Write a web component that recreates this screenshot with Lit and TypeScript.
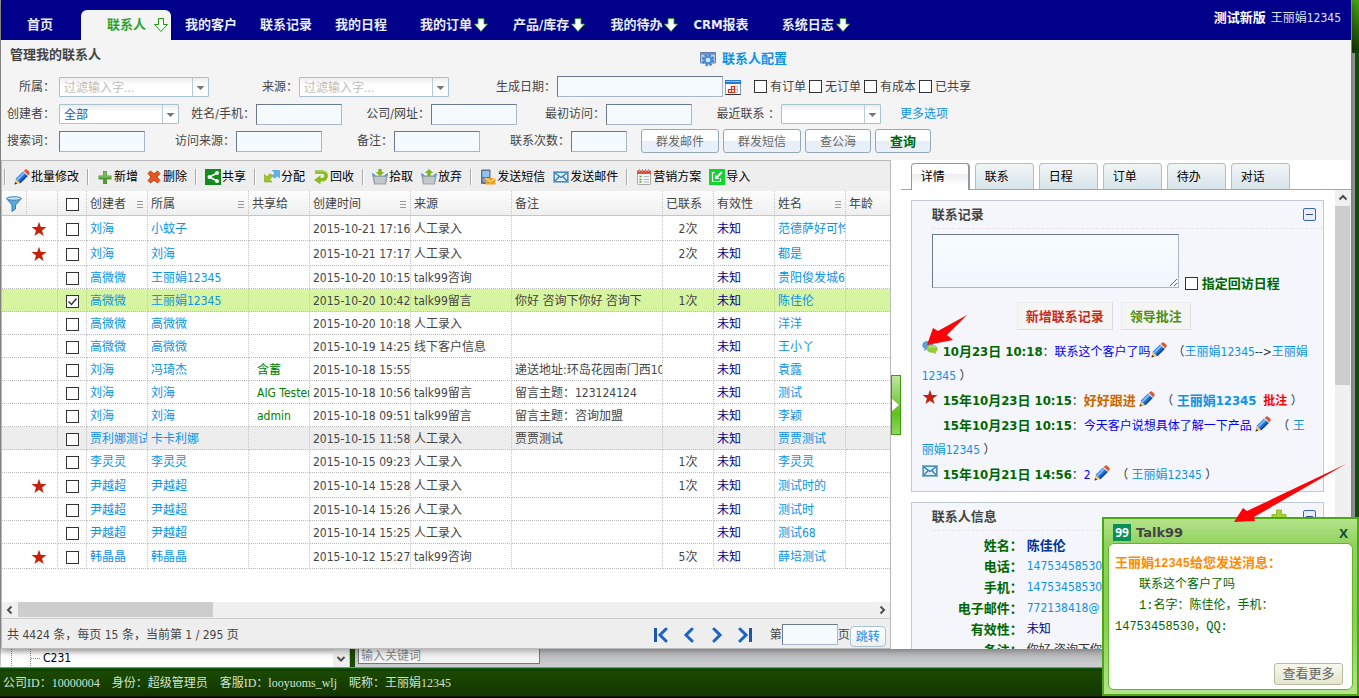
import { LitElement, html, css, nothing, TemplateResult } from "lit";
import { customElement, property, state } from "lit/decorators.js";
import { classMap } from "lit/directives/class-map.js";

const icons: Record<string, TemplateResult> = {
  pencil: html`<svg viewBox="0 0 16 16"><path d="M.5 15.500L1.700 9.800 6.400 14.300z" fill="#f2c27a"/><path d="M.5 15.500l.6-2.600 2.100 1.900z" fill="#333"/><path d="M1.700 9.800L9.600 1.900l4.600 4.500-7.800 7.900z" fill="#1f6fd0"/><path d="M2.500 10L10 2.500l1.500 1.500L4 11.500z" fill="#7dbcf5"/><path d="M5.300 13.200l7.800-7.900 1.100 1.100-7.800 7.900z" fill="#0c4593"/><path d="M9.600 1.900L11 .7q1.200-.9 2.400.2l1.700 1.700q1 1.100.2 2.400l-1.100 1.400z" fill="#e2532d"/><path d="M8.900 2.600l.9-.9 4.500 4.500-.9.9z" fill="#d8dde4"/></svg>`,
  plus: html`<svg viewBox="0 0 16 16"><path d="M6 2h4v4.500h4.500v4H10V15H6v-4.500H1.500v-4H6z" fill="#4f9a35"/><path d="M6.500 2.500h3V7H14v1.500H2V7h4.500z" fill="#79b85f"/></svg>`,
  plusLight: html`<svg viewBox="0 0 16 16"><path d="M5.500 1h5v4.500H15v5h-4.500V15h-5v-4.500H1v-5h4.500z" fill="#a8cf38" stroke="#8dbb2c"/></svg>`,
  cross: html`<svg viewBox="0 0 16 16"><path d="M2 4.500L4.500 2 8 5l3.500-3L14 4.500 11 8l3 3.500-2.500 2.500L8 11l-3.500 3L2 11.500 5 8z" fill="#e2571f" stroke="#c8431a"/></svg>`,
  share: html`<svg viewBox="0 0 16 16"><rect width="16" height="16" fill="#128a1c"/><path d="M12 4L4.500 8 12 12" fill="none" stroke="#fff" stroke-width="1.500"/><circle cx="12" cy="4" r="2" fill="#fff"/><circle cx="4.500" cy="8" r="2" fill="#fff"/><circle cx="12" cy="12" r="2" fill="#fff"/></svg>`,
  assign: html`<svg viewBox="0 0 16 16"><path d="M.5 13V5.500l2.300 2.300L6.300 4.600l2.500 2.500-3 3.400L8 13z" fill="#9cc32c" stroke="#7ea51d" stroke-width=".6"/><path d="M15.500 1.500v7.500L13.200 6.700 10.700 9.300 8.200 6.700 11 4.300 8.500 1.500z" fill="#5db4e8" stroke="#3a93cc" stroke-width=".6"/></svg>`,
  recycle: html`<svg viewBox="0 0 16 16"><path d="M2 3h7.200a3.900 3.900 0 0 1 0 7.800H6.500" fill="none" stroke="#8ab923" stroke-width="3.600"/><path d="M7.500 6.300V15.500L1 11z" fill="#8ab923"/><path d="M2 2.200h7a4.600 4.600 0 0 1 3.800 2" fill="none" stroke="#b6da55"/></svg>`,
  basketIn: html`<svg viewBox="0 0 16 16"><path d="M0 5h2.500l1 1.500h9L13.500 5H16l-2 10.500H2z" fill="#9aa0a6"/><path d="M2 8h12l-1.300 6.500H3.300z" fill="#c3c8cc"/><path d="M0 4.500l3.500 3M16 4.500l-3.500 3" stroke="#4aa3dd" stroke-width="1.600"/><path d="M6.300 0h3.400v3h2.500L8 7.300 3.800 3h2.500z" fill="#7fb520"/></svg>`,
  basketOut: html`<svg viewBox="0 0 16 16"><path d="M0 5h2.500l1 1.500h9L13.500 5H16l-2 10.500H2z" fill="#9aa0a6"/><path d="M2 8h12l-1.300 6.500H3.300z" fill="#c3c8cc"/><path d="M0 4.500l3.500 3M16 4.500l-3.500 3" stroke="#4aa3dd" stroke-width="1.600"/><path d="M6.300 7.300h3.400V4h2.500L8 0 3.800 4h2.500z" fill="#7fb520"/></svg>`,
  phone: html`<svg viewBox="0 0 16 16"><rect x="1" y=".5" width="9.500" height="14.500" rx="1" fill="#5c6f86"/><rect x="2.300" y="2" width="7" height="6" fill="#8fc3f0"/><path d="M2.500 10h6M2.500 12h4" stroke="#c9d3de" stroke-width="1"/><rect x="5.500" y="9" width="10" height="6.500" fill="#f0a21d"/><path d="M5.500 9l5 3.700 5-3.700" fill="none" stroke="#fff2cf"/></svg>`,
  mail: html`<svg viewBox="0 0 16 16"><rect x=".5" y="2.500" width="15" height="11" fill="#4c90bd" stroke="#86b4cf"/><rect x="2" y="4" width="12" height="8" fill="#d9ecf7"/><path d="M2 4l6 4.500L14 4M2 12l4.200-4.500M14 12L9.800 7.500" fill="none" stroke="#3978a8" stroke-width="1.200"/></svg>`,
  plan: html`<svg viewBox="0 0 16 16"><rect x="1.500" y="2.500" width="13" height="13" rx="1" fill="#f5f5f5" stroke="#a9a9a9"/><rect x="1" y="1.500" width="14" height="3.500" fill="#dd5238"/><path d="M3.500 0v3M6.500 0v3M9.500 0v3M12.500 0v3" stroke="#9a9a9a"/><path d="M3.500 7.500h2M3.500 10.500h2M3.500 13h2" stroke="#5b9d33" stroke-width="1.500"/><path d="M7.500 7.500H13M7.500 10.500H13M7.500 13H13" stroke="#b5b5b5"/></svg>`,
  import: html`<svg viewBox="0 0 16 16"><rect width="16" height="16" fill="#10d52c"/><path d="M6 3.500H3.500V12.500H11.500V9.500" fill="none" stroke="#fff" stroke-width="1.200"/><path d="M12.800 3.200L8 8" stroke="#fff" stroke-width="2"/><path d="M6 5.500V10h4.500z" fill="#fff"/></svg>`,
  config: html`<svg viewBox="0 0 16 16"><path d="M.5 1.500h15v10.500H.5z" fill="#b4c8e2" stroke="#6483b0"/><path d="M1 2h14v1.500H1z" fill="#6c8dbc"/><circle cx="8" cy="9" r="5.200" fill="none" stroke="#3f86cc" stroke-width="2" stroke-dasharray="2.400 1.680"/><circle cx="8" cy="9" r="3.400" fill="#d5e6f7" stroke="#4a8fd2" stroke-width="2.400"/></svg>`,
  calendar: html`<svg viewBox="0 0 16 16"><rect x=".5" y="1.500" width="15" height="14" fill="#fff" stroke="#8aa0b8"/><path d="M0 1h16v4H0z" fill="#2478d8"/><path d="M1 2h14v1H1z" fill="#8fc4f8"/><path d="M.5 15.500h15" stroke="#333"/><path d="M9.500 7.500h3v6h-3zM9.500 10.500h3" fill="none" stroke="#b8c0c8"/><path d="M3.500 10.500h3v3h-3zM6.500 10.500h3v3h-3zM6.500 7.500h3v3h-3z" fill="none" stroke="#e02a12" stroke-width="1.200"/></svg>`,
  funnel: html`<svg viewBox="0 0 16 16"><path d="M.5 2.500L6 9v6.500l3.500-2.500V9l6-6.500z" fill="#56abe0" stroke="#2b7fb8"/><ellipse cx="8" cy="2.500" rx="7.300" ry="1.700" fill="#d3ecfa" stroke="#2b7fb8"/></svg>`,
  star: html`<svg viewBox="0 0 16 16"><path d="M8 .8l1.800 5.200 5.700.1-4.500 3.400 1.600 5.500L8 11.800 3.400 15 5 9.500.5 6.100l5.700-.1z" fill="#c8200a"/></svg>`,
  chat: html`<svg viewBox="0 0 16 16"><path d="M6 1C2.500 1 .3 2.800.3 5.200c0 1.500.8 2.600 2.200 3.400L2 11l3-1.700c4 .3 6.500-1.500 6.500-4.100S9.300 1 6 1z" fill="#5f9fd8"/><path d="M10 5c3.300 0 5.600 1.600 5.600 4 0 1.300-.7 2.300-1.900 3l.6 2.300-3-1.600c-4 .4-6.500-1.300-6.500-3.700S6.800 5 10 5z" fill="#93cc3a"/><path d="M6.500 7.500q3.500-2.500 7 0" fill="none" stroke="#cdeb8f"/></svg>`,
  down: html`<svg viewBox="0 0 14 14"><path d="M4.500.5h5v6h4L7 13.500.5 6.500h4z" fill="#fff" stroke="#1f9a10"/></svg>`,
  downBold: html`<svg viewBox="0 0 14 14"><path d="M4 .5h6v5.500h3.700L7 13.500.3 6H4z" fill="#fff" stroke="#1f9a10" stroke-width=".8"/></svg>`,
  first: html`<svg viewBox="0 0 16 16"><path d="M2.500 1v14" stroke="#1c55ad" stroke-width="3"/><path d="M13 2L7 8l6 6" fill="none" stroke="#1b63c6" stroke-width="3" stroke-linecap="round"/></svg>`,
  prev: html`<svg viewBox="0 0 16 16"><path d="M11 2L5 8l6 6" fill="none" stroke="#1b63c6" stroke-width="3" stroke-linecap="round"/></svg>`,
  next: html`<svg viewBox="0 0 16 16"><path d="M5 2l6 6-6 6" fill="none" stroke="#1b63c6" stroke-width="3" stroke-linecap="round"/></svg>`,
  last: html`<svg viewBox="0 0 16 16"><path d="M13.500 1v14" stroke="#1c55ad" stroke-width="3"/><path d="M3 2l6 6-6 6" fill="none" stroke="#1b63c6" stroke-width="3" stroke-linecap="round"/></svg>`,
  caretL: html`<svg viewBox="0 0 16 16"><path d="M9.500 4.500L6 8l3.500 3.500" fill="none" stroke="#505050" stroke-width="2"/></svg>`,
  caretR: html`<svg viewBox="0 0 16 16"><path d="M6.500 4.500L10 8l-3.500 3.500" fill="none" stroke="#505050" stroke-width="2"/></svg>`,
  caretU: html`<svg viewBox="0 0 16 16"><path d="M4.500 9.500L8 6l3.500 3.500" fill="none" stroke="#505050" stroke-width="2"/></svg>`,
  caretD: html`<svg viewBox="0 0 16 16"><path d="M4.500 6.500L8 10l3.500-3.500" fill="none" stroke="#505050" stroke-width="2"/></svg>`,
};

@customElement("ui-icon")
class UiIcon extends LitElement {
  @property() name = "";
  static styles = css`
    :host { display: inline-block; width: 16px; height: 16px; flex: none; }
    svg { display: block; width: 100%; height: 100%; }
  `;
  render() { return icons[this.name] ?? nothing; }
}

interface NavItem { text: string; menu?: boolean; active?: boolean; cls?: string }
const NAV: NavItem[] = [
  { text: "首页", cls: "home" },
  { text: "联系人", menu: true, active: true },
  { text: "我的客户" }, { text: "联系记录" }, { text: "我的日程" },
  { text: "我的订单", menu: true }, { text: "产品/库存", menu: true },
  { text: "我的待办", menu: true }, { text: "CRM报表" }, { text: "系统日志", menu: true },
];

const TOOLS: (string[] | null)[] = [
  null, ["pencil", "批量修改"], null, ["plus", "新增"], ["cross", "删除"], null,
  ["share", "共享"], null, ["assign", "分配"], ["recycle", "回收"], null,
  ["basketIn", "拾取"], ["basketOut", "放弃"], null,
  ["phone", "发送短信"], ["mail", "发送邮件"], null, ["plan", "营销方案"], ["import", "导入"],
];

interface Row {
  star?: boolean; creator: string; owner: string; shared?: string; time: string;
  source?: string; note?: string; count?: string; name: string; checked?: boolean; hover?: boolean;
}
const ROWS: Row[] = [
  { star: true, creator: "刘海", owner: "小蚊子", time: "2015-10-21 17:16", source: "人工录入", count: "2次", name: "范德萨好可怜" },
  { star: true, creator: "刘海", owner: "刘海", time: "2015-10-21 17:17", source: "人工录入", count: "2次", name: "都是" },
  { creator: "高微微", owner: "王丽娟12345", time: "2015-10-20 10:15", source: "talk99咨询", name: "贵阳俊发城6" },
  { creator: "高微微", owner: "王丽娟12345", time: "2015-10-20 10:42", source: "talk99留言", note: "你好 咨询下你好 咨询下", count: "1次", name: "陈佳伦", checked: true },
  { creator: "高微微", owner: "高微微", time: "2015-10-20 10:18", source: "人工录入", name: "洋洋" },
  { creator: "高微微", owner: "高微微", time: "2015-10-19 14:25", source: "线下客户信息", name: "王小丫" },
  { creator: "刘海", owner: "冯琦杰", shared: "含蓄", time: "2015-10-18 15:55", note: "递送地址:环岛花园南门西100", name: "袁露" },
  { creator: "刘海", owner: "刘海", shared: "AIG Tester", time: "2015-10-18 10:56", source: "talk99留言", note: "留言主题：123124124", name: "测试" },
  { creator: "刘海", owner: "刘海", shared: "admin", time: "2015-10-18 09:51", source: "talk99留言", note: "留言主题：咨询加盟", name: "李颖" },
  { creator: "贾利娜测试", owner: "卡卡利娜", time: "2015-10-15 11:58", source: "人工录入", note: "贾贾测试", name: "贾贾测试", hover: true },
  { creator: "李灵灵", owner: "李灵灵", time: "2015-10-15 09:23", source: "人工录入", count: "1次", name: "李灵灵" },
  { star: true, creator: "尹越超", owner: "尹越超", time: "2015-10-14 15:28", source: "人工录入", count: "1次", name: "测试时的" },
  { creator: "尹越超", owner: "尹越超", time: "2015-10-14 15:26", source: "人工录入", name: "测试时" },
  { creator: "尹越超", owner: "尹越超", time: "2015-10-14 15:25", source: "人工录入", name: "测试68" },
  { star: true, creator: "韩晶晶", owner: "韩晶晶", time: "2015-10-12 15:27", source: "talk99咨询", count: "5次", name: "薛培测试" },
];

const base = css`
  * { box-sizing: border-box; }
  button, input, select, textarea { font: inherit; margin: 0; color: inherit; }
  button { cursor: pointer; white-space: nowrap; }
  a { color: #0a93e8; text-decoration: none; }
  input[type="checkbox"] {
    appearance: none; width: 13px; height: 13px; flex: none;
    border: 1px solid #333; background: #fff center / 11px no-repeat;
  }
  input[type="checkbox"]:checked {
    background-image: url("data:image/svg+xml,%3Csvg xmlns='http://www.w3.org/2000/svg' viewBox='0 0 11 11'%3E%3Cpath d='M1.500 5.500l3 3 5-6' fill='none' stroke='%23333' stroke-width='1.500'/%3E%3C/svg%3E");
  }
  .box {
    height: 21px; border: 1px solid; border-color: #687a8c #a8b8ca #a8b8ca #687a8c;
    background: #f4fafe; padding: 0 3px; width: 100%; border-radius: 0;
  }
`;

@customElement("search-filters")
class SearchFilters extends LitElement {
  static styles = [base, css`
    :host { display: block; height: 120px; background: #f4f4f4; color: #444; }
    .head { display: flex; height: 34px; }
    .title { margin: 0; padding: 4px 0 0 9px; width: 699px; font-size: 13px; line-height: 21px; }
    .config { display: flex; align-items: center; gap: 6px; font-size: 13px; font-weight: bold; height: 22px; margin-top: 8px; }
    .row { display: grid; column-gap: 4px; align-items: center; white-space: nowrap; line-height: 20px; }
    .r1 { grid-template-columns: 54px 150px 82px 150px 100px 166px 1fr; height: 25px; }
    .r2 { grid-template-columns: 54px 120px 69px 86px 81px 86px 81px 86px 81px 100px 1fr; height: 30px; }
    .r3 { grid-template-columns: 54px 86px 83px 86px 64px 86px 83px 56px 1fr; height: 24px; }
    label { text-align: right; }
    .row > label:not(:first-child) { margin-right: -3px; }
    .combo {
      appearance: none; width: 100%; height: 20px; padding: 0 20px 0 4px; border: 1px solid #a9c3ce; border-radius: 1px;
      line-height: 20px; color: #1c5ca0;
      background:
        url("data:image/svg+xml,%3Csvg xmlns='http://www.w3.org/2000/svg' viewBox='0 0 16 18'%3E%3Cpath d='M.5 0v18' stroke='%23b5ccd5'/%3E%3Cpath d='M4.500 8h8l-4 4z' fill='%23777'/%3E%3C/svg%3E") right center / 16px 18px no-repeat,
        linear-gradient(#ededed, #fff 7px);
    }
    .hint { color: #bdbdbd; }
    .checks { display: flex; align-items: center; margin-left: -2px; }
    .cal { border: 0; background: none; padding: 0; display: flex; margin-right: 13px; }
    .tick { display: flex; align-items: center; gap: 3px; margin-right: 3px; }
    .more { margin-left: 15px; }
    .btns { display: flex; gap: 4px; margin-left: 10px; }
    .btn {
      height: 24px; min-width: 56px; padding: 0 14px; border: 1px solid #94a9b8; border-radius: 3px; color: #666; line-height: 24px;
      background: linear-gradient(#fcfeff 0 50%, #e6eef8 50%, #e9f0f9);
    }
    .go { font-size: 13px; font-weight: bold; color: #060; }
  `];
  render() {
    const text = (id: string, label: string) => html`<label for=${id}>${label}</label><input class="box" id=${id}>`;
    return html`
      <div class="head">
        <h1 class="title">管理我的联系人</h1>
        <a class="config" href="#"><ui-icon name="config"></ui-icon>联系人配置</a>
      </div>
      <div class="row r1">
        <label for="owner">所属：</label><select class="combo hint" id="owner"><option>过滤输入字...</option></select>
        <label for="src">来源：</label><select class="combo hint" id="src"><option>过滤输入字...</option></select>
        ${text("date", "生成日期：")}
        <div class="checks">
          <button class="cal" aria-label="日历"><ui-icon name="calendar"></ui-icon></button>
          ${["有订单", "无订单", "有成本", "已共享"].map((t) => html`<label class="tick"><input type="checkbox">${t}</label>`)}
        </div>
      </div>
      <div class="row r2">
        <label for="creator">创建者：</label><select class="combo" id="creator"><option>全部</option></select>
        ${text("name", "姓名/手机：")}${text("company", "公司/网址：")}${text("firstv", "最初访问：")}
        <label for="recent">最近联系 ：</label><select class="combo" id="recent"><option></option></select>
        <a class="more" href="#">更多选项</a>
      </div>
      <div class="row r3">
        ${text("kw", "搜索词：")}${text("visit", "访问来源：")}${text("note", "备注：")}${text("times", "联系次数：")}
        <div class="btns">
          <button class="btn">群发邮件</button><button class="btn">群发短信</button>
          <button class="btn">查公海</button><button class="btn go">查询</button>
        </div>
      </div>`;
  }
}

@customElement("contact-grid")
class ContactGrid extends LitElement {
  @state() rows = ROWS;
  static styles = [base, css`
    :host { display: flex; flex-direction: column; min-width: 0; border: 1px solid #bbb; background: #fff; color: #444; }
    .tools { display: flex; align-items: center; gap: 8px; height: 30px; background: #eee; padding: 2px 0 0 2px; flex: none; }
    .sep { width: 2px; height: 16px; background: #aaa; border-right: 1px solid #fff; flex: none; }
    .tool { display: flex; align-items: center; gap: 1px; padding: 0; border: 0; background: none; color: #000; line-height: 20px; }
    .body { flex: 1; min-height: 0; overflow: hidden; }
    table { width: 100%; table-layout: fixed; border-collapse: separate; border-spacing: 0; }
    th, td {
      overflow: hidden; white-space: nowrap; text-align: left; font-weight: normal; line-height: 20px;
      padding: 2px 0 0 3px; border-right: 1px dotted #c4c4c4;
    }
    th:last-child, td:last-child { border-right: 0; }
    th { height: 25px; border-bottom: 1px solid #c6c6c6; background: linear-gradient(#fdfdfd, #efefef); }
    .th { display: flex; justify-content: space-between; align-items: center; }
    .grip { width: 6px; height: 7px; margin-right: 4px; background: repeating-linear-gradient(#999 0 1px, transparent 1px 3px); }
    td { height: 23px; border-bottom: 1px dotted #bbb; }
    tr.starred td { height: 25px; }
    tr.on td { background: #d7f4a0; }
    tr.hover td { background: #ededed; }
    td:first-child { border-right: 0; }
    .c { text-align: center; padding: 2px 0 0; }
    .c input { display: block; margin: 0 auto; }
    .c ui-icon { display: block; margin: 0 auto; }
    .flag ui-icon { margin: 0 0 0 4px; }
    .shared { color: #008000; padding-left: 8px; }
    .valid { color: #00008b; }
    .w1 { width: 25px; } .w2 { width: 31px; } .w3 { width: 29px; } .w4 { width: 61px; }
    .w5 { width: 101px; } .w6 { width: 151px; } .w7 { width: 51px; } .w8 { width: 71px; }
    .hbar { display: flex; height: 16px; background: #f0f0f0; flex: none; }
    .thumb { width: 22%; background: #cdcdcd; height: 15px; }
    .grow { flex: 1; }
    .pager { display: flex; align-items: center; height: 30px; background: #eee; border-top: 1px solid #ccc; padding: 2px 4px 0 5px; flex: none; white-space: nowrap; }
    .pos { word-spacing: normal; }
    .nav { display: flex; gap: 12px; margin-right: 17px; }
    .nav button { border: 0; padding: 0; background: none; display: flex; }
    .page { width: 56px; }
    .jump { width: 36px; height: 21px; padding: 0; margin-top: 4px; border: 1px solid #a9c5d4; border-radius: 4px; background: linear-gradient(#fff, #eee); color: #0a93e8; line-height: 20px; }
  `];
  render() {
    const th = (cls: string, text: string, grip = false) =>
      html`<th class=${cls}><div class="th">${text}${grip ? html`<span class="grip"></span>` : nothing}</div></th>`;
    return html`
      <div class="tools">
        ${TOOLS.map((t) => t ? html`<button class="tool"><ui-icon name=${t[0]}></ui-icon>${t[1]}</button>` : html`<span class="sep"></span>`)}
      </div>
      <div class="body">
        <table>
          <thead><tr>
            <th class="w1 c"><ui-icon name="funnel"></ui-icon></th><th class="w2"></th>
            <th class="w3 c"><input type="checkbox" aria-label="全选"></th>
            ${th("w4", "创建者", true)}${th("w5", "所属", true)}${th("w4", "共享给")}${th("w5", "创建时间", true)}
            ${th("w5", "来源")}${th("w6", "备注")}${th("w7", "已联系")}${th("w4", "有效性")}${th("w8", "姓名", true)}${th("", "年龄")}
          </tr></thead>
          <tbody>
            ${this.rows.map((r) => html`<tr class=${classMap({ starred: !!r.star, on: !!r.checked, hover: !!r.hover })}>
              <td></td><td class="c flag">${r.star ? html`<ui-icon name="star"></ui-icon>` : nothing}</td>
              <td class="c"><input type="checkbox" aria-label=${r.name} .checked=${!!r.checked}></td>
              <td><a href="#">${r.creator}</a></td><td><a href="#">${r.owner}</a></td>
              <td class="shared">${r.shared}</td><td>${r.time}</td><td>${r.source}</td><td>${r.note}</td>
              <td class="c">${r.count}</td><td class="valid">未知</td><td><a href="#">${r.name}</a></td><td></td>
            </tr>`)}
          </tbody>
        </table>
      </div>
      <div class="hbar"><ui-icon name="caretL"></ui-icon><div class="thumb"></div><div class="grow"></div><ui-icon name="caretR"></ui-icon></div>
      <div class="pager">
        <span>共 4424 条，每页 15 条，当前第 1 / 295 页</span><span class="grow"></span>
        <div class="nav">${["first", "prev", "next", "last"].map((n) => html`<button aria-label=${n}><ui-icon name=${n}></ui-icon></button>`)}</div>
        <label for="page">第</label><input class="box page" id="page"><span>页</span><button class="jump">跳转</button>
      </div>`;
  }
}

@customElement("detail-pane")
class DetailPane extends LitElement {
  static styles = [base, css`
    :host { display: flex; flex-direction: column; background: #fff; color: #333; min-width: 0; }
    .tabs { display: flex; gap: 5px; padding: 3px 0 0 10px; height: 30px; border-bottom: 1px solid #9aa9b4; flex: none; }
    .tab {
      width: 59px; height: 26px; padding: 0 9px; text-align: left; border: 1px solid #b4bec6; border-bottom: 0; border-radius: 4px 4px 0 0;
      background: linear-gradient(#f2f5f6, #d6e4ea); color: #000; line-height: 27px;
    }
    .tab.on { height: 27px; border-color: #8e9aa4; border-right-width: 2px; background: linear-gradient(#fff 35%, #eee 40%, #fff 80%); }
    .wrap { display: flex; flex: 1; min-height: 0; }
    .scroll { flex: 1; min-width: 0; overflow: hidden; padding: 10px 11px 0 10px; }
    .vbar { width: 16px; background: #f0f0f0; flex: none; }
    .vbar ui-icon { display: block; }
    .vthumb { width: 15px; height: 39%; background: #cdcdcd; }
    .card { border: 1px solid #bfcad6; background: #f4f6fb; margin-bottom: 10px; padding: 0 10px; height: 292px; }
    .cardhead { display: flex; align-items: center; height: 28px; margin-left: 10px; margin-right: -10px; border-bottom: 1px dashed #e4e6ea; gap: 16px; }
    h2 { flex: 1; margin: 0; font-size: 13px; color: #444; line-height: 20px; }
    .fold { width: 13px; height: 13px; margin-right: 7px; padding: 0; border: 1px solid #3d63b8; border-radius: 2px; background: linear-gradient(#2b4c9c, #2b4c9c) center / 7px 1px no-repeat #e9eefa; flex: none; }
    .compose { display: flex; align-items: flex-end; gap: 6px; padding: 5px 0 0 10px; height: 63px; }
    textarea { width: 247px; height: 54px; margin-bottom: 4px; border: 1px solid; border-color: #687a8c #a8b8ca #a8b8ca #687a8c; background: linear-gradient(#f6fcfe, #f1f7fd); }
    .visit { display: flex; align-items: center; gap: 4px; font-size: 13px; font-weight: bold; color: #060; line-height: 17px; white-space: nowrap; }
    .acts { display: flex; gap: 8px; padding-left: 95px; margin: 10px 0; }
    .act { height: 28px; padding: 0 8px; border: 1px solid; border-color: #ececec #ddd #ddd #ececec; background: #f5f5f5; font-size: 13px; font-weight: bold; line-height: 28px; color: #cc2a18; }
    .act.green { color: #4b8e14; }
    .log { list-style: none; margin: 0; padding: 0; }
    .log li { line-height: 24px; margin-bottom: 1px; }
    .log ui-icon { vertical-align: -2px; }
    .lead { margin-right: 5px; }
    .log .lead { vertical-align: 0; }
    .blank { display: inline-block; width: 21px; }
    .time { font-size: 13px; font-weight: bold; color: #060; }
    .msg { color: #00f; }
    .note { color: #c60; font-size: 13px; font-weight: bold; }
    .who { margin-left: 6px; }
    .tag { color: #f00; }
    .strong { font-size: 13px; font-weight: bold; }
    dl { display: grid; grid-template-columns: 101px 1fr; column-gap: 4px; margin: 4px 0 0; line-height: 21px; white-space: nowrap; }
    dt { text-align: right; font-size: 13px; font-weight: bold; color: #060; }
    dd { margin: 0; }
    .person { font-size: 13px; font-weight: bold; color: #039; }
    .valid { color: #00008b; }
  `];
  render() {
    const pen = html`<ui-icon name="pencil"></ui-icon>`;
    return html`
      <div class="tabs" role="tablist">
        ${["详情", "联系", "日程", "订单", "待办", "对话"].map((t, i) => html`<button role="tab" class=${classMap({ tab: true, on: i === 0 })}>${t}</button>`)}
      </div>
      <div class="wrap">
        <div class="scroll">
          <section class="card">
            <div class="cardhead"><h2>联系记录</h2><button class="fold" aria-label="收起"></button></div>
            <div class="compose">
              <textarea aria-label="联系记录"></textarea>
              <label class="visit"><input type="checkbox">指定回访日程</label>
            </div>
            <div class="acts"><button class="act">新增联系记录</button><button class="act green">领导批注</button></div>
            <ul class="log">
              <li><ui-icon class="lead" name="chat"></ui-icon><span class="time">10月23日 10:18</span>：<span class="msg">联系这个客户了吗</span>${pen}<span class="who">（<a href="#">王丽娟12345</a>--&gt;<a href="#">王丽娟12345</a> ）</span></li>
              <li><ui-icon class="lead" name="star"></ui-icon><span class="time">15年10月23日 10:15</span>：<span class="note">好好跟进</span> ${pen}<span class="who">（ <a class="strong" href="#">王丽娟12345</a>&nbsp; <b class="tag">批注</b> ）</span></li>
              <li><span class="blank"></span><span class="time">15年10月23日 10:15</span>：<span class="msg">今天客户说想具体了解一下产品</span> ${pen}<span class="who">（ <a href="#">王丽娟12345</a> ）</span></li>
              <li><ui-icon class="lead" name="mail"></ui-icon><span class="time">15年10月21日 14:56</span>：<span class="msg">2</span> ${pen}<span class="who">（ <a href="#">王丽娟12345</a> ）</span></li>
            </ul>
          </section>
          <section class="card">
            <div class="cardhead"><h2>联系人信息</h2><ui-icon name="plusLight"></ui-icon><button class="fold" aria-label="收起"></button></div>
            <dl>
              <dt>姓名：</dt><dd class="person">陈佳伦</dd>
              <dt>电话：</dt><dd><a href="#">14753458530</a></dd>
              <dt>手机：</dt><dd><a href="#">14753458530</a></dd>
              <dt>电子邮件：</dt><dd><a href="#">772138418@</a></dd>
              <dt>有效性：</dt><dd class="valid">未知</dd>
              <dt>备注：</dt><dd>你好 咨询下你好</dd>
            </dl>
          </section>
        </div>
        <div class="vbar"><ui-icon name="caretU"></ui-icon><div class="vthumb"></div></div>
      </div>`;
  }
}

@customElement("talk-popup")
class TalkPopup extends LitElement {
  static styles = [base, css`
    :host {
      display: flex; flex-direction: column; width: 257px; height: 179px; padding: 0 4px 4px; border: 2px solid #4da713;
      background: linear-gradient(#b5e38c, #8fd25e 26px, #8ad052 60%, #b2e38a);
    }
    header { display: flex; align-items: center; gap: 5px; height: 24px; padding: 3px 3px 0 5px; flex: none; }
    .logo { width: 18px; height: 17px; background: #0a8f55; color: #fff; font: bold 12px/17px "Open Sans", "Noto Sans", sans-serif; text-align: center; }
    .brand { flex: 1; font: bold 13px/18px "DejaVu Sans", sans-serif; color: #444; }
    .close { border: 0; padding: 0 2px; background: none; font: bold 13px/18px "Open Sans", "Noto Sans", sans-serif; color: #0a4a3c; }
    .inner { flex: 1; display: flex; flex-direction: column; background: #fff; border: 1px solid #62b42d; border-radius: 6px; padding: 9px 6px 4px; color: #060; font-family: "Liberation Mono", "Noto Sans CJK SC", monospace; line-height: 21px; }
    p { margin: 0; }
    .from { color: #ff8a00; font-size: 13px; font-weight: bold; }
    .num { font-size: 12px; }
    .ind { text-indent: 24px; }
    .more { align-self: flex-end; margin: auto 3px 0 0; height: 22px; width: 69px; padding: 0; border: 1px solid #b5bb9c; border-radius: 3px; background: linear-gradient(#f8f8ec, #e2e5ce); font-size: 13px; color: #666; line-height: 22px; }
  `];
  render() {
    return html`
      <header><span class="logo">99</span><span class="brand">Talk99</span><button class="close" aria-label="关闭">X</button></header>
      <div class="inner">
        <p class="from">王丽娟<span class="num">12345</span>给您发送消息：</p>
        <p class="ind">联系这个客户了吗</p>
        <p class="ind">1:名字：陈佳伦，手机：14753458530，QQ:</p>
        <button class="more">查看更多</button>
      </div>`;
  }
}

@customElement("app-root")
class AppRoot extends LitElement {
  static styles = [base, css`
    :host {
      display: block; position: relative; height: 100vh; min-width: 1200px; overflow: hidden; background: #a9a9a9;
      font: 12px/20px "DejaVu Sans Condensed", "Noto Sans", "Noto Sans CJK SC", sans-serif;
    }
    .desk { display: flex; flex-direction: column; height: 100%; background: linear-gradient(#49a80e, #123c04 50px, #0c4a16 51px 53px, transparent 53px) right / 7px 100% no-repeat, linear-gradient(#14500f, #14500f) right / 4px 100% no-repeat, #a9a9a9; }
    .win { flex: 1; min-height: 0; display: flex; flex-direction: column; margin: 0 8px 0 1px; background: #fff; box-shadow: 0 0 9px rgba(0,0,0,.5); position: relative; z-index: 1; }
    nav { display: flex; align-items: flex-end; height: 40px; background: #00008b; flex: none; white-space: nowrap; }
    .item { display: flex; align-items: center; height: 30px; padding: 0 11px 0 12px; font-size: 13px; font-weight: bold; color: #e8ecf4; }
    .item ui-icon { width: 14px; height: 14px; }
    .home { padding: 0 28px 0 26px; }
    .menu { gap: 2px; padding: 0 3px 0 22px; }
    .item.active { gap: 8px; padding: 0 3px 0 26px; margin-right: 2px; background: #f4f4f4; color: #2ca32c; border-radius: 6px 6px 0 0; }
    .user { display: flex; gap: 5px; align-self: center; margin: 0 10px 5px auto; color: #dfe6f5; }
    .user b { font-size: 13px; color: #fff; }
    .main { flex: 1; min-height: 0; display: flex; }
    contact-grid { flex: 889 1 0; }
    detail-pane { flex: 451 1 0; }
    .split { display: flex; align-items: center; width: 10px; flex: none; }
    .handle { width: 10px; height: 60px; padding: 0; border: 1px solid #3f9a0c; background: linear-gradient(#bfe6a4, #5fc11e 65%, #8fd95f); display: flex; align-items: center; }
    .handle::after { content: ""; border: 6px solid transparent; border-left: 7px solid #fff; border-right: 0; }
    .under { display: flex; height: 19px; flex: none; background: linear-gradient(#b4b5b7, #cfd0d2); overflow: hidden; border-bottom: 1px solid #888; }
    .tree { display: flex; width: 348px; margin-left: 1px; background: linear-gradient(#ddd, #fff 6px); color: #000; align-items: center; padding-left: 10px; flex: none; }
    .line { width: 19px; height: 19px; border-left: 1px dotted #888; }
    .twig { width: 9px; border-top: 1px dotted #888; margin: 0 3px 0 -18px; }
    .tree ui-icon { margin-left: auto; background: #eee; height: 19px; }
    .bar { width: 5px; margin: 0 3px 0 1px; background: #1a4a06; flex: none; }
    .find { width: 182px; height: 15px; padding: 0 2px; border: 1px solid #777; border-top: 0; background: #f4f4f4; line-height: 14px; }
    .find::placeholder { color: #888; opacity: 1; }
    .status { display: flex; gap: 12px; align-items: center; height: 30px; padding-left: 3px; flex: none; color: #cfe3d4; background: linear-gradient(#135a12 1px, #0c2e02 2px, #1a4a00 3px, #143500 28px, #000 29px); font-family: "Liberation Serif", "Noto Sans CJK SC", serif; }
    talk-popup { position: absolute; right: 0; bottom: 2px; z-index: 2; }
    .arrow { position: absolute; z-index: 3; fill: #fb0407; }
    .a1 { right: 392px; top: 315px; width: 41px; height: 31px; }
    .a2 { right: 13px; bottom: 175px; width: 112px; height: 59px; }
  `];
  render() {
    return html`
      <div class="desk">
        <div class="win">
          <nav>
            ${NAV.map((n) => html`<a href="#" class=${classMap({ item: true, menu: !!n.menu, active: !!n.active, home: n.cls === "home" })}>${n.text}${n.menu ? html`<ui-icon name=${n.active ? "down" : "downBold"}></ui-icon>` : nothing}</a>`)}
            <div class="user"><b>测试新版</b><span>王丽娟12345</span></div>
          </nav>
          <search-filters></search-filters>
          <div class="main">
            <contact-grid></contact-grid>
            <div class="split"><button class="handle" aria-label="收起右侧"></button></div>
            <detail-pane></detail-pane>
          </div>
        </div>
        <div class="under">
          <div class="tree"><span class="line"></span><span class="line"></span><span class="twig"></span>C231<ui-icon name="caretD"></ui-icon></div>
          <span class="bar"></span>
          <input class="find" placeholder="输入关键词" aria-label="关键词">
        </div>
        <div class="status"><span>公司ID：10000004</span><span>身份：超级管理员</span><span>客服ID：looyuoms_wlj</span><span>昵称：王丽娟12345</span></div>
      </div>
      <talk-popup></talk-popup>
      <svg class="arrow a1" viewBox="0 0 41 31"><path d="M1 30L7 13l5 3L41 0 21 20l6 5z"/></svg>
      <svg class="arrow a2" viewBox="0 0 112 59"><path d="M0 58l9-14 4 3L112 0 20 53l1 4z"/></svg>`;
  }
}
